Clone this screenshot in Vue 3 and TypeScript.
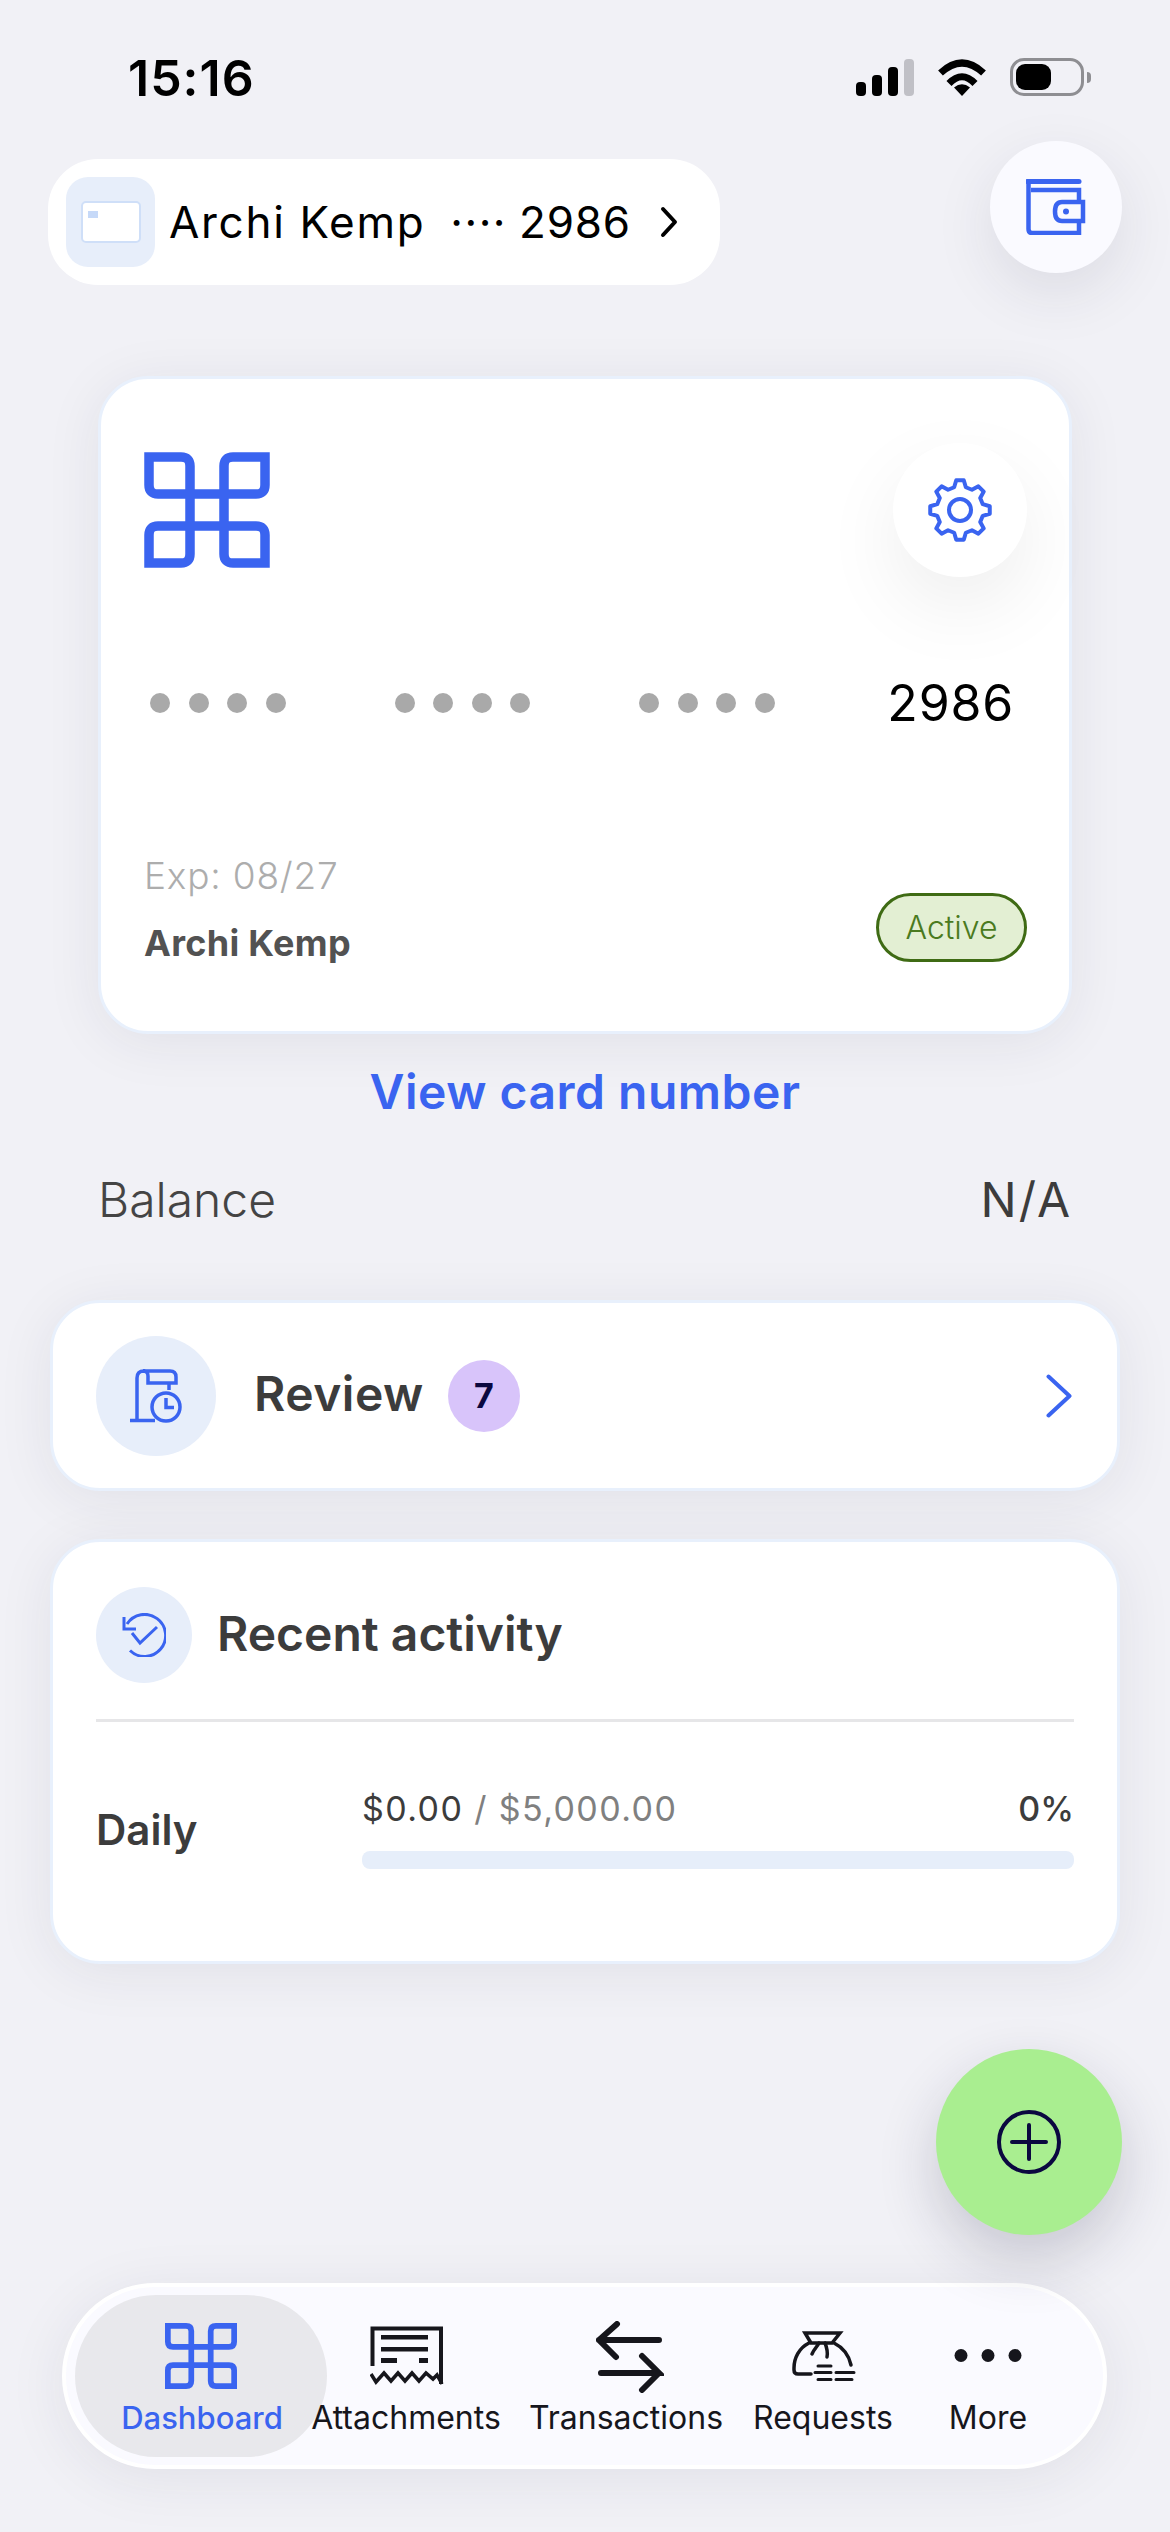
<script setup lang="ts">
const logoPath =
  'M46 42V14Q46 5 37 5H5V33Q5 42 14 42H112Q121 42 121 33V5H89Q80 5 80 14V102Q80 111 89 111H121V83Q121 74 112 74H14Q5 74 5 83V111H37Q46 111 46 102Z'

function gearPath(teeth: number, outer: number, inner: number): string {
  const points: string[] = []
  const step = (Math.PI * 2) / teeth
  for (let i = 0; i < teeth; i++) {
    const a = i * step - Math.PI / 2
    const spots: [number, number][] = [
      [a - step * 0.32, inner],
      [a - step * 0.16, outer],
      [a + step * 0.16, outer],
      [a + step * 0.32, inner],
    ]
    for (const [ang, r] of spots) {
      points.push(`${(32 + Math.cos(ang) * r).toFixed(2)} ${(32 + Math.sin(ang) * r).toFixed(2)}`)
    }
  }
  return 'M' + points.join('L') + 'Z'
}
const gear = gearPath(8, 30, 23.5)

const dotGroups = [0, 1, 2]
const dots = [0, 1, 2, 3]
</script>

<template>
  <div class="screen">
    <div class="status">
      <span class="time">15:16</span>
      <div class="status-icons">
        <div class="signal">
          <i class="bar b1"></i><i class="bar b2"></i><i class="bar b3"></i><i class="bar b4"></i>
        </div>
        <svg class="wifi" width="50" height="37" viewBox="0 0 50 37">
          <path d="M3.500 14Q25 -6 46.500 14" fill="none" stroke="#000" stroke-width="7" />
          <path d="M12 24.500Q25 11 38 24.500" fill="none" stroke="#000" stroke-width="7" />
          <path d="M25 37L17 28.500Q25 22 33 28.500Z" fill="#000" />
        </svg>
        <div class="battery"><i class="level"></i></div>
        <i class="nub"></i>
      </div>
    </div>

    <div class="header">
      <div class="account">
        <div class="tile">
          <div class="mini-card"><i></i></div>
        </div>
        <span class="account-name">Archi Kemp</span>
        <span class="account-dots">····</span>
        <span class="account-num">2986</span>
        <svg class="account-chev" width="18" height="32" viewBox="0 0 18 32">
          <path d="M3 3L15 16L3 29" fill="none" stroke="#000" stroke-width="4" stroke-linecap="round" stroke-linejoin="round" />
        </svg>
      </div>
      <div class="wallet">
        <svg width="60" height="56" viewBox="0 0 60 56">
          <path d="M1 2.500H53" fill="none" stroke="#3a64f0" stroke-width="5" stroke-linecap="round" />
          <path d="M2.500 3V50Q2.500 54 6 54H53V44M53 22V11H5" fill="none" stroke="#3a64f0" stroke-width="4.500" />
          <path d="M57 23H36Q29 23 29 32.500Q29 42 36 42H57Z" fill="none" stroke="#3a64f0" stroke-width="4.500" />
          <circle cx="40" cy="32.500" r="3" fill="#3a64f0" />
        </svg>
      </div>
    </div>

    <section class="card">
      <div class="card-top">
        <svg width="126" height="116" viewBox="0 0 126 116">
          <path :d="logoPath" fill="none" stroke="#3a64f0" stroke-width="9.500" />
        </svg>
        <div class="gear-btn">
          <svg width="64" height="64" viewBox="0 0 64 64">
            <path :d="gear" fill="none" stroke="#3a64f0" stroke-width="4" stroke-linejoin="round" />
            <circle cx="32" cy="32" r="11" fill="none" stroke="#3a64f0" stroke-width="4" />
          </svg>
        </div>
      </div>
      <div class="number">
        <div v-for="g in dotGroups" :key="g" class="dot-group">
          <i v-for="d in dots" :key="d" class="dot"></i>
        </div>
        <span class="last4">2986</span>
      </div>
      <div class="card-bottom">
        <div class="holder">
          <span class="exp">Exp: 08/27</span>
          <span class="holder-name">Archi Kemp</span>
        </div>
        <span class="active">Active</span>
      </div>
    </section>

    <div class="view-link">View card number</div>

    <div class="balance">
      <span class="balance-label">Balance</span>
      <span class="balance-value">N/A</span>
    </div>

    <section class="review">
      <div class="round round-lg">
        <svg width="52" height="54" viewBox="0 0 52 54">
          <g fill="none" stroke="#3a64f0" stroke-width="3.500">
            <path d="M0 51.500H25M7 51.500V9Q7 2 14 2H40Q46 2 46 8V14H18V7Q18 2 13 2" />
            <path d="M39 14V21" />
            <circle cx="36" cy="38" r="14" />
            <path d="M36 29V38.500H44" />
          </g>
        </svg>
      </div>
      <span class="review-label">Review</span>
      <span class="badge">7</span>
      <svg class="review-chev" width="26" height="44" viewBox="0 0 26 44">
        <path d="M2.500 2.500L23.500 22L2.500 41.500" fill="none" stroke="#3a64f0" stroke-width="4" stroke-linecap="round" stroke-linejoin="round" />
      </svg>
    </section>

    <section class="activity">
      <div class="activity-head">
        <div class="round round-md">
          <svg width="44" height="44" viewBox="0 0 44 44">
            <g fill="none" stroke="#3a64f0" stroke-width="3">
              <path d="M5 11A21 21 0 1 1 8 37.500" />
              <path d="M2 4V16H14" />
              <path d="M10 20L18 30L35 14" stroke-linejoin="miter" />
            </g>
          </svg>
        </div>
        <span class="activity-title">Recent activity</span>
      </div>
      <div class="divider"></div>
      <div class="limit">
        <span class="limit-label">Daily</span>
        <div class="limit-body">
          <div class="limit-text">
            <span class="amount">$0.00 <span class="amount-of">/ $5,000.00</span></span>
            <span class="percent">0%</span>
          </div>
          <div class="track"></div>
        </div>
      </div>
    </section>

    <nav class="tabbar">
      <div class="tab tab-active">
        <svg width="72" height="66" viewBox="0 0 126 116" preserveAspectRatio="none">
          <path :d="logoPath" fill="none" stroke="#3a64f0" stroke-width="10" />
        </svg>
        <span class="tab-label">Dashboard</span>
      </div>
      <div class="tab tab-attach">
        <svg width="74" height="60" viewBox="0 0 74 60">
          <g fill="none" stroke="#16161c">
            <path d="M2.500 40V2.500H71V58" stroke-width="4" />
            <path d="M1 48L6 56L14 47L21 55L28 47L35 55L42 47L49 55L56 47L63 53L67 49L72 58" stroke-width="3.500" />
          </g>
          <path d="M11 9H58V13.500H11ZM11 21H58V25.500H11ZM11 32H27V37H11ZM49 32H58V37H49Z" fill="#16161c" />
        </svg>
        <span class="tab-label">Attachments</span>
      </div>
      <div class="tab tab-trans">
        <svg width="68" height="72" viewBox="0 0 68 72">
          <g fill="none" stroke="#16161c" stroke-width="6" stroke-linecap="round">
            <path d="M21 3L3 19L20 36M3 19H63" />
            <path d="M5 52H63L46 35M63 52L46 69" />
          </g>
        </svg>
        <span class="tab-label">Transactions</span>
      </div>
      <div class="tab tab-req">
        <svg width="64" height="52" viewBox="0 0 64 52">
          <g fill="none" stroke="#16161c" stroke-width="3.500" stroke-linecap="round">
            <path d="M19 12L13 2H48L40 12ZM17 12C7 17 2 27 2 37V39Q2 43 6 43H19M42 12C52 17 57 25 59 34" />
            <path d="M27 12C25 16 22 18 20 23M33 12C35 17 36 21 35 26" />
            <path d="M26 35H39M23 41.500H39M44 41.500H62M26 48.500H39M44 48.500H60" stroke-width="3" />
          </g>
        </svg>
        <span class="tab-label">Requests</span>
      </div>
      <div class="tab tab-more">
        <div class="more-dots"><i></i><i></i><i></i></div>
        <span class="tab-label">More</span>
      </div>
    </nav>

    <button class="fab" type="button" aria-label="Add">
      <svg width="66" height="66" viewBox="0 0 66 66">
        <circle cx="33" cy="33" r="30" fill="none" stroke="#0b0840" stroke-width="4" />
        <path d="M33 16V50M16 33H50" fill="none" stroke="#0b0840" stroke-width="4" stroke-linecap="round" />
      </svg>
    </button>
  </div>
</template>

<style scoped>
.screen {
  position: relative;
  width: 1170px;
  height: 2532px;
  overflow: hidden;
  background: #f1f1f6;
  font-family: "Inter", "Liberation Sans", sans-serif;
  color: #3c3c3c;
}
.screen i {
  display: block;
}

/* status bar */
.status {
  height: 141px;
  display: flex;
  justify-content: space-between;
  align-items: flex-start;
  padding: 0 79px 0 128px;
  box-sizing: border-box;
}
.time {
  margin-top: 50px;
  font-size: 50px;
  line-height: 56px;
  font-weight: 600;
  color: #000;
  letter-spacing: 1px;
}
.status-icons {
  margin-top: 58px;
  display: flex;
  align-items: center;
  height: 38px;
}
.signal {
  display: flex;
  align-items: flex-end;
  gap: 6px;
  height: 37px;
  margin-right: 23px;
}
.bar {
  width: 10px;
  border-radius: 4px;
  background: #000;
}
.b1 { height: 14px; }
.b2 { height: 21px; }
.b3 { height: 29px; }
.b4 { height: 37px; background: #c0c0c6; }
.battery {
  width: 74px;
  height: 38px;
  margin-left: 23px;
  box-sizing: border-box;
  border: 3px solid #8e8e92;
  border-radius: 14px;
  padding: 3px;
}
.level {
  width: 35px;
  height: 26px;
  border-radius: 9px;
  background: #000;
}
.nub {
  width: 4px;
  height: 11px;
  margin-left: 3px;
  border-radius: 0 4px 4px 0;
  background: #8e8e92;
}

/* header */
.header {
  height: 132px;
  display: flex;
  justify-content: space-between;
  align-items: flex-start;
  padding: 0 48px;
}
.account {
  margin-top: 18px;
  width: 672px;
  height: 126px;
  box-sizing: border-box;
  padding-left: 18px;
  display: flex;
  align-items: center;
  background: #fff;
  border-radius: 50px;
  color: #000;
}
.tile {
  width: 89px;
  height: 90px;
  border-radius: 22px;
  background: #e7eefa;
  display: flex;
  align-items: center;
  justify-content: center;
}
.mini-card {
  width: 60px;
  height: 42px;
  box-sizing: border-box;
  border: 2px solid #cfdff8;
  border-radius: 5px;
  background: #fff;
  padding: 8px 0 0 5px;
}
.mini-card i {
  width: 10px;
  height: 7px;
  background: #c6d9f8;
}
.account-name {
  margin-left: 14px;
  font-size: 44px;
  line-height: 56px;
  letter-spacing: 1.700px;
}
.account-dots {
  margin-left: 25px;
  font-size: 44px;
  line-height: 56px;
  letter-spacing: 1.500px;
}
.account-num {
  margin-left: 12px;
  font-size: 44px;
  line-height: 56px;
  letter-spacing: 0.8px;
}
.account-chev {
  margin-left: 29px;
}
.wallet {
  width: 132px;
  height: 132px;
  border-radius: 50%;
  background: #fafaff;
  display: flex;
  align-items: center;
  justify-content: center;
  box-shadow: 0 20px 60px rgba(40, 40, 70, 0.1);
}

/* card */
.card {
  margin: 103px 98px 0;
  height: 658px;
  box-sizing: border-box;
  padding: 0 42px 69px 43px;
  display: flex;
  flex-direction: column;
  background: #fff;
  border: 3px solid #e8f0fc;
  border-radius: 50px;
  box-shadow: 0 8px 56px rgba(40, 40, 70, 0.08);
}
.card-top {
  padding-top: 64px;
  display: flex;
  justify-content: space-between;
  align-items: center;
}
.gear-btn {
  width: 134px;
  height: 134px;
  border-radius: 50%;
  background: #fff;
  display: flex;
  align-items: center;
  justify-content: center;
  box-shadow: 0 30px 80px rgba(0, 0, 0, 0.07);
}
.number {
  margin-top: 106px;
  height: 40px;
  padding: 0 13px 0 6px;
  display: flex;
  align-items: center;
  gap: 109px;
}
.dot-group {
  display: flex;
  gap: 18.500px;
}
.dot {
  width: 20px;
  height: 20px;
  border-radius: 50%;
  background: #a9a9a9;
}
.last4 {
  margin-left: auto;
  font-size: 50px;
  line-height: 56px;
  letter-spacing: 0.8px;
  color: #000;
}
.card-bottom {
  margin-top: auto;
  display: flex;
  justify-content: space-between;
  align-items: flex-end;
}
.holder {
  display: flex;
  flex-direction: column;
  gap: 23px;
  margin-bottom: -3px;
}
.exp {
  font-size: 37px;
  line-height: 44px;
  font-weight: 300;
  letter-spacing: 0.8px;
  color: #adadad;
}
.holder-name {
  font-size: 36px;
  line-height: 44px;
  font-weight: 700;
  letter-spacing: 0.3px;
  color: #525252;
}
.active {
  width: 151px;
  height: 69px;
  box-sizing: border-box;
  border: 3px solid #3f6b14;
  border-radius: 35px;
  background: #e3efd3;
  color: #4a7a20;
  font-size: 32px;
  line-height: 63px;
  font-weight: 300;
  text-align: center;
}

/* link + balance */
.view-link {
  margin-top: 30px;
  text-align: center;
  font-size: 48px;
  line-height: 56px;
  font-weight: 600;
  letter-spacing: 0.5px;
  color: #3a64f0;
}
.balance {
  margin-top: 52px;
  padding: 0 98px;
  display: flex;
  justify-content: space-between;
  font-size: 48px;
  line-height: 56px;
}
.balance-label {
  color: #444;
  font-weight: 300;
}
.balance-value {
  color: #3c3c3c;
  font-weight: 400;
  letter-spacing: 2px;
}

/* review */
.review,
.activity {
  margin-left: 50px;
  margin-right: 50px;
  box-sizing: border-box;
  background: #fff;
  border: 3px solid #e8f0fc;
  border-radius: 50px;
  box-shadow: 0 8px 56px rgba(40, 40, 70, 0.08);
}
.review {
  margin-top: 72px;
  height: 191px;
  padding: 0 45px 0 43px;
  display: flex;
  align-items: center;
}
.round {
  border-radius: 50%;
  background: #e7eefa;
  display: flex;
  align-items: center;
  justify-content: center;
  flex: none;
}
.round-lg {
  width: 120px;
  height: 120px;
}
.round-md {
  width: 96px;
  height: 96px;
}
.review-label {
  margin-left: 38px;
  padding-bottom: 4px;
  font-size: 48px;
  line-height: 56px;
  font-weight: 600;
  letter-spacing: 0.5px;
}
.badge {
  margin-left: 24px;
  width: 72px;
  height: 72px;
  border-radius: 50%;
  background: #d8c4fa;
  color: #0b0840;
  font-size: 34px;
  line-height: 72px;
  font-weight: 700;
  text-align: center;
}
.review-chev {
  margin-left: auto;
}

/* activity */
.activity {
  margin-top: 48px;
  height: 425px;
  padding: 45px 43px 0;
}
.activity-head {
  display: flex;
  align-items: center;
  gap: 25px;
}
.activity-title {
  padding-bottom: 3px;
  font-size: 48px;
  line-height: 56px;
  font-weight: 600;
}
.divider {
  margin-top: 36px;
  height: 3px;
  background: #e6e6e8;
}
.limit {
  margin-top: 68px;
  display: flex;
  align-items: center;
}
.limit-label {
  width: 266px;
  flex: none;
  font-size: 42px;
  line-height: 50px;
  font-weight: 600;
}
.limit-body {
  flex: 1;
}
.limit-text {
  display: flex;
  justify-content: space-between;
  padding-top: 1px;
  margin-bottom: -1px;
  font-size: 34px;
  line-height: 36px;
  font-weight: 500;
}
.amount {
  color: #3c3c3c;
  font-weight: 400;
  letter-spacing: 1.400px;
}
.amount-of {
  color: #808080;
}
.percent {
  color: #3c3c3c;
}
.track {
  margin-top: 25px;
  height: 18px;
  border-radius: 8px;
  background: #e6eefa;
}

/* tab bar */
.tabbar {
  margin: 319px 63px 0 62px;
  height: 186px;
  box-sizing: border-box;
  padding: 8px 9px;
  display: flex;
  background: #fafaff;
  border: 4px solid #fff;
  border-radius: 93px;
  box-shadow: 0 10px 60px rgba(40, 40, 70, 0.08);
}
.tab {
  position: relative;
  flex: none;
  height: 162px;
  color: #16161c;
}
.tab svg,
.more-dots {
  position: absolute;
  left: 50%;
  transform: translateX(-50%);
}
.tab-label {
  position: absolute;
  top: 104px;
  left: 50%;
  transform: translateX(-50%);
  font-size: 32px;
  line-height: 38px;
  white-space: nowrap;
}
.tab-active {
  width: 252px;
  border-radius: 81px;
  background: #e8e8ec;
  color: #3a64f0;
}
.tab-active .tab-label {
  font-size: 31px;
  font-weight: 500;
  left: 127px;
}
.tab-active svg { top: 28px; left: 126px; }
.tab-attach { width: 180px; margin-left: -12px; }
.tab-attach svg { top: 31px; left: calc(50% + 2px); }
.tab-attach .tab-label { left: calc(50% + 1px); }
.tab-trans { width: 200px; margin-left: 31px; }
.tab-trans svg { top: 26px; left: calc(50% + 4px); }
.tab-req { width: 160px; margin-left: 10px; }
.tab-req svg { top: 36px; left: calc(50% + 8px); }
.tab-req .tab-label { left: calc(50% + 7px); }
.tab-more { width: 120px; margin-left: 32px; }
.more-dots {
  top: 54px;
  display: flex;
  gap: 14px;
}
.more-dots i {
  width: 13px;
  height: 13px;
  border-radius: 50%;
  background: #16161c;
}

.fab {
  position: absolute;
  left: 936px;
  top: 2049px;
  width: 186px;
  height: 186px;
  padding: 0;
  border: 0;
  border-radius: 50%;
  background: #a9ee90;
  display: flex;
  align-items: center;
  justify-content: center;
  box-shadow: 0 24px 60px rgba(30, 30, 60, 0.2);
}
</style>

<style>
html, body {
  background: #f1f1f6;
}
</style>
